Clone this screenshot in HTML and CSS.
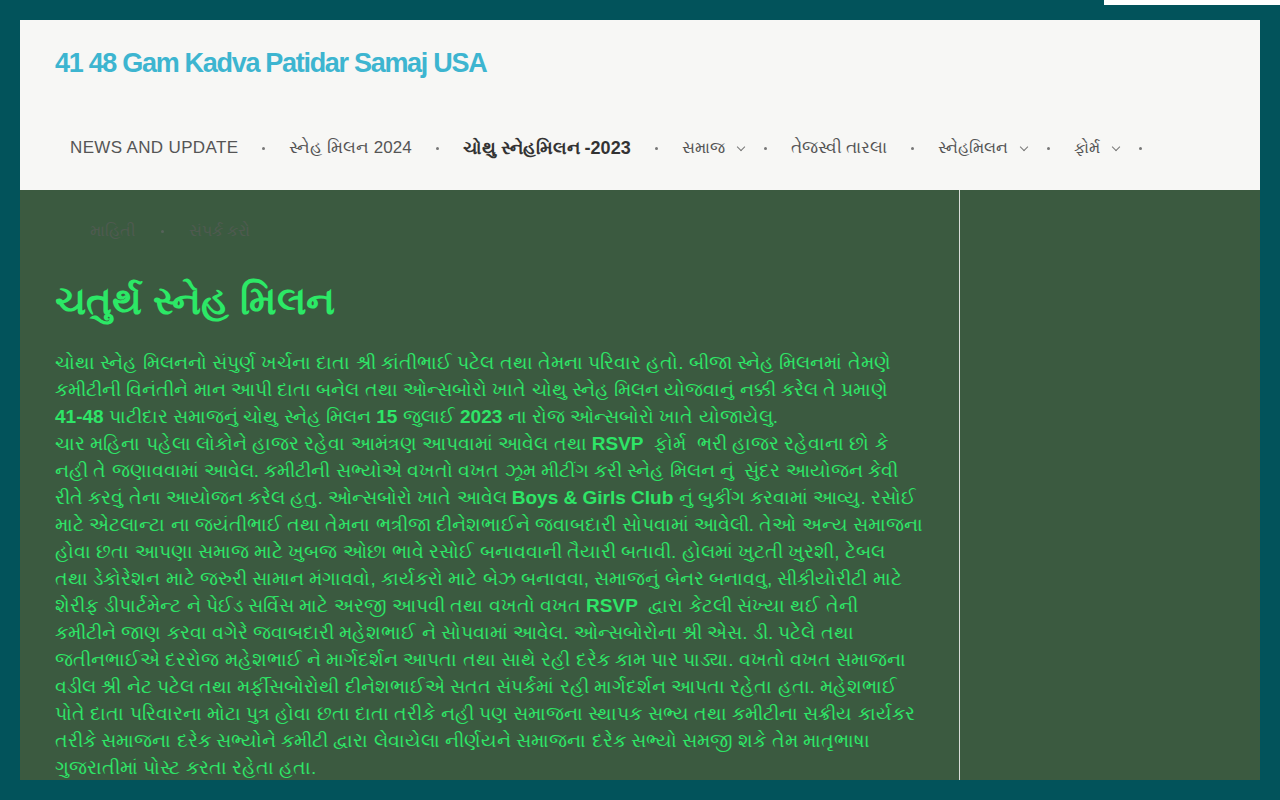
FILE: index.html
```html
<!DOCTYPE html>
<html lang="gu">
<head>
<meta charset="utf-8">
<title>41 48 Gam Kadva Patidar Samaj USA</title>
<link rel="stylesheet" href="styles.css">
</head>
<body>
<div class="topbar"></div>
<div class="site">
  <header class="site-header">
    <div class="site-title">41 48 Gam Kadva Patidar Samaj USA</div>
    <nav class="menu">
      <a class="item caps">NEWS AND UPDATE</a><span class="dot"></span>
      <a class="item wide">સ્નેહ મિલન 2024</a><span class="dot"></span>
      <a class="item current">ચોથુ સ્નેહમિલન -2023</a><span class="dot"></span>
      <a class="item">સમાજ<span class="chev"></span></a><span class="dot"></span>
      <a class="item wide">તેજસ્વી તારલા</a><span class="dot"></span>
      <a class="item">સ્નેહમિલન<span class="chev"></span></a><span class="dot"></span>
      <a class="item">ફોર્મ<span class="chev"></span></a><span class="dot"></span>
    </nav>
  </header>
  <div class="content-area">
    <main class="main">
      <nav class="menu menu-wrap">
        <a class="item">માહિતી</a><span class="dot"></span>
        <a class="item">સંપર્ક કરો</a>
      </nav>
      <h1 class="entry-title">ચતુર્થ સ્નેહ મિલન</h1>
      <p class="entry">ચોથા સ્નેહ મિલનનો સંપુર્ણ ખર્ચના દાતા શ્રી કાંતીભાઈ પટેલ તથા તેમના પરિવાર હતો. બીજા સ્નેહ મિલનમાં તેમણે<br>કમીટીની વિનંતીને માન આપી દાતા બનેલ તથા ઓન્સબોરો ખાતે ચોથુ સ્નેહ મિલન યોજવાનું નક્કી કરેલ તે પ્રમાણે<br><b>41-48</b> પાટીદાર સમાજનું ચોથુ સ્નેહ મિલન <b>15</b> જુલાઈ <b>2023</b> ના રોજ ઓન્સબોરો ખાતે યોજાયેલુ.<br>ચાર મહિના પહેલા લોકોને હાજર રહેવા આમંત્રણ આપવામાં આવેલ તથા <b>RSVP</b>&nbsp; ફોર્મ&nbsp; ભરી હાજર રહેવાના છો કે<br>નહી તે જણાવવામાં આવેલ. કમીટીની સભ્યોએ વખતો વખત ઝૂમ મીટીંગ કરી સ્નેહ મિલન નું&nbsp; સુંદર આયોજન કેવી<br>રીતે કરવું તેના આયોજન કરેલ હતુ. ઓન્સબોરો ખાતે આવેલ <b>Boys &amp; Girls Club</b> નું બુકીંગ કરવામાં આવ્યુ. રસોઈ<br>માટે એટલાન્ટા ના જયંતીભાઈ તથા તેમના ભત્રીજા દીનેશભાઈને જવાબદારી સોપવામાં આવેલી. તેઓ અન્ય સમાજના<br>હોવા છતા આપણા સમાજ માટે ખુબજ ઓછા ભાવે રસોઈ બનાવવાની તૈયારી બતાવી. હોલમાં ખુટતી ખુરશી, ટેબલ<br>તથા ડેકોરેશન માટે જરુરી સામાન મંગાવવો, કાર્યકરો માટે બેઝ બનાવવા, સમાજનું બેનર બનાવવુ, સીકીયોરીટી માટે<br>શેરીફ ડીપાર્ટમેન્ટ ને પેઈડ સર્વિસ માટે અરજી આપવી તથા વખતો વખત <b>RSVP</b>&nbsp; દ્વારા કેટલી સંખ્યા થઈ તેની<br>કમીટીને જાણ કરવા વગેરે જવાબદારી મહેશભાઈ ને સોપવામાં આવેલ. ઓન્સબોરોના શ્રી એસ. ડી. પટેલે તથા<br>જતીનભાઈએ દરરોજ મહેશભાઈ ને માર્ગદર્શન આપતા તથા સાથે રહી દરેક કામ પાર પાડ્યા. વખતો વખત સમાજના<br>વડીલ શ્રી નેટ પટેલ તથા મર્ફીસબોરોથી દીનેશભાઈએ સતત સંપર્કમાં રહી માર્ગદર્શન આપતા રહેતા હતા. મહેશભાઈ<br>પોતે દાતા પરિવારના મોટા પુત્ર હોવા છતા દાતા તરીકે નહી પણ સમાજના સ્થાપક સભ્ય તથા કમીટીના સક્રીય કાર્યકર<br>તરીકે સમાજના દરેક સભ્યોને કમીટી દ્વારા લેવાયેલા નીર્ણયને સમાજના દરેક સભ્યો સમજી શકે તેમ માતૃભાષા<br>ગુજરાતીમાં પોસ્ટ કરતા રહેતા હતા.</p>
    </main>
    <aside class="sidebar"></aside>
  </div>
</div>
</body>
</html>
```
FILE: styles.css
```css
html, body {
  margin: 0;
  padding: 0;
}
body {
  background: #02535b;
  font-family: "Liberation Sans", Arial, sans-serif;
  height: 800px;
  overflow: hidden;
}
.topbar {
  position: absolute;
  top: 0;
  right: 0;
  width: 176px;
  height: 5px;
  background: #ffffff;
}
.site {
  margin: 20px;
  height: 760px;
  overflow: hidden;
  display: flex;
  flex-direction: column;
}
.site-header {
  background: #f7f7f5;
  height: 170px;
  flex: none;
  padding: 0 35px;
  box-sizing: border-box;
}
.site-title {
  padding-top: 25px;
  font-size: 27px;
  line-height: 36px;
  font-weight: bold;
  color: #3db5d0;
  letter-spacing: -1.3px;
}
.menu {
  display: flex;
  align-items: center;
  gap: 24px;
  padding-left: 15px;
  margin-top: 55px;
  height: 24px;
  font-family: "Liberation Sans", sans-serif;
}
.item {
  font-size: 16px;
  color: #555555;
  white-space: nowrap;
  display: flex;
  align-items: center;
}
.caps {
  font-size: 17px;
  letter-spacing: 0.35px;
}
.wide {
  font-size: 17px;
}
.current {
  font-weight: bold;
  color: #333333;
  font-size: 18px;
}
.chev {
  width: 5px;
  height: 5px;
  border-right: 1px solid #777;
  border-bottom: 1px solid #777;
  transform: rotate(45deg);
  margin-left: 13px;
  margin-right: -4px;
  margin-top: -3px;
}
.dot {
  width: 3px;
  height: 3px;
  border-radius: 50%;
  background: #777777;
  flex: none;
}
.content-area {
  flex: 1;
  display: flex;
  background: #3b5a40;
}
.main {
  width: 940px;
  box-sizing: border-box;
  border-right: 1px solid #d9ddd9;
  padding: 0 35px;
}
.menu-wrap {
  margin-top: 29px;
  padding-left: 35px;
  gap: 25px;
}
.menu-wrap .item {
  color: #4f5a50;
}
.menu-wrap .dot {
  background: #56625a;
}
.entry-title {
  margin: 30px 0 0;
  font-family: "Liberation Sans", sans-serif;
  font-size: 39px;
  line-height: 56px;
  font-weight: bold;
  color: #2ce866;
}
.entry {
  margin: 20px 0 0;
  font-family: "Liberation Sans", sans-serif;
  font-size: 19px;
  line-height: 27px;
  color: #2ee567;
  white-space: nowrap;
}
.sidebar {
  flex: 1;
}
```
